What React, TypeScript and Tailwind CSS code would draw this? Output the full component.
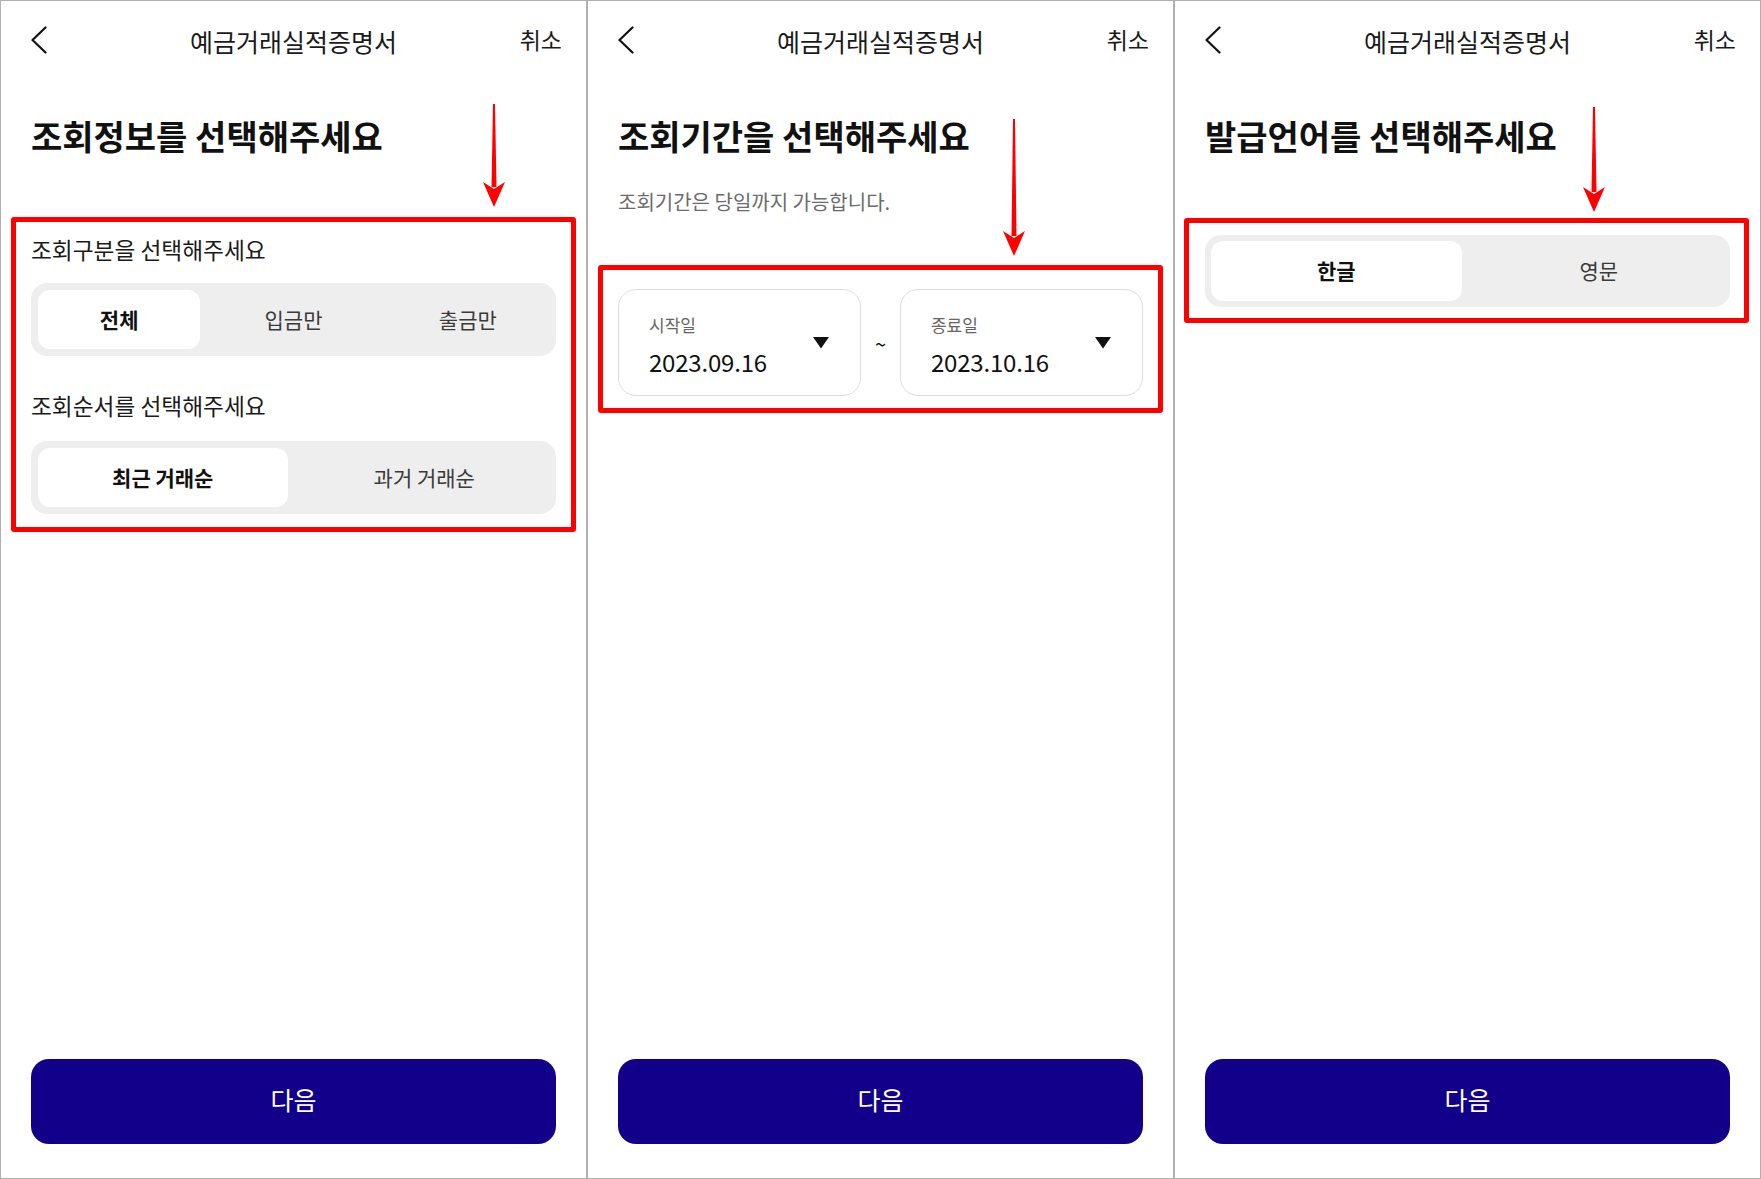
import React from "react";

const Arrow = ({ className, len }: { className: string; len: number }) => (
  <svg className={className} width={24} height={len} viewBox={`0 0 24 ${len}`}>
    <polygon points={`11,0 13,0 14.5,${len - 20} 9.5,${len - 20}`} fill="#ff0000" />
    <polygon points={`1,${len - 25} 12,${len - 18} 23,${len - 25} 12,${len}`} fill="#ff0000" />
  </svg>
);

const Header = () => (
  <div className="grid h-[83px] shrink-0 grid-cols-[1fr_auto_1fr] items-center px-[24px]">
    <div className="mb-[6px] ml-[6px] flex">
      <svg width="16" height="28" viewBox="0 0 16 28">
        <polyline points="14.5,1.5 1.5,14 14.5,26.5" fill="none" stroke="#111" strokeWidth="2.2" strokeLinecap="round" strokeLinejoin="round" />
      </svg>
    </div>
    <div className="mb-[4px] text-[25px] leading-[32px] text-[#1a1a1a]">예금거래실적증명서</div>
    <div className="mb-[7px] text-right text-[23px] leading-[30px] text-[#1a1a1a]">취소</div>
  </div>
);

const Seg = ({ items, selected, tall }: { items: string[]; selected: number; tall?: boolean }) => (
  <div className={tall ? "flex h-[73px] gap-3 rounded-[16px] bg-[#eeeeee] p-[7px]" : "flex h-[72px] gap-3 rounded-[16px] bg-[#eeeeee] p-[6px]"}>
    {items.map((t, i) =>
      i === selected ? (
        <div key={t} className="flex flex-1 items-center justify-center rounded-[12px] bg-white text-[21px] font-bold text-[#111]">
          {t}
        </div>
      ) : (
        <div key={t} className="flex flex-1 items-center justify-center text-[21px] text-[#3a3a3a]">
          {t}
        </div>
      )
    )}
  </div>
);

const Heading = ({ children }: { children: React.ReactNode }) => (
  <h1 className="mb-[2px] mt-[28px] text-[34px] font-bold leading-[48px] text-[#111]">{children}</h1>
);

const NextButton = () => (
  <div className="mx-[30px] mb-[34px] mt-auto flex h-[85px] items-center justify-center rounded-[18px] bg-[#13008a] pb-[4px] text-[25px] text-white">
    다음
  </div>
);

const DateBox = ({ label, value }: { label: string; value: string }) => (
  <div className="flex h-[107px] w-[243px] items-center justify-between rounded-[18px] border border-[#dddddd] pl-[30px] pr-[31px]">
    <div className="flex flex-col pt-[7px]">
      <span className="text-[17px] leading-[22px] text-[#666666]">{label}</span>
      <span className="mt-[10px] text-[24px] leading-[32px] tracking-[-0.2px] text-[#111]">{value}</span>
    </div>
    <svg width="16" height="12" viewBox="0 0 16 12">
      <polygon points="0,0 16,0 8,11.5" fill="#111" />
    </svg>
  </div>
);

export default function App() {
  return (
    <div className="flex h-[1179px] w-[1761px] border border-[#b0b0b0] bg-white font-['Noto_Sans_CJK_KR','Noto_Sans',sans-serif]">
      {/* Panel 1 */}
      <div className="relative flex w-[585px] flex-col">
        <Header />
        <div className="flex flex-col px-[30px]">
          <Heading>조회정보를 선택해주세요</Heading>
          <div className="mt-[71px] text-[22.7px] leading-[33px] text-[#1a1a1a]">조회구분을 선택해주세요</div>
          <div className="mt-[17px]">
            <Seg items={["전체", "입금만", "출금만"]} selected={0} tall />
          </div>
          <div className="mt-[33px] text-[22.7px] leading-[33px] text-[#1a1a1a]">조회순서를 선택해주세요</div>
          <div className="mt-[19px]">
            <Seg items={["최근 거래순", "과거 거래순"]} selected={0} tall />
          </div>
        </div>
        <NextButton />
        <div className="pointer-events-none absolute left-[10px] top-[216px] h-[315px] w-[565px] rounded-[3px] border-[5px] border-[#ff0000]" />
        <Arrow className="pointer-events-none absolute left-[481px] top-[103px]" len={103} />
      </div>
      <div className="w-[2px] shrink-0 bg-[#b0b0b0]" />
      {/* Panel 2 */}
      <div className="relative flex w-[585px] flex-col">
        <Header />
        <div className="flex flex-col px-[30px]">
          <Heading>조회기간을 선택해주세요</Heading>
          <div className="mt-[26px] text-[20px] leading-[27px] text-[#6b6b6b]">조회기간은 당일까지 가능합니다.</div>
          <div className="mt-[74px] flex items-center justify-between">
            <DateBox label="시작일" value="2023.09.16" />
            <span className="mt-[2px] text-[20px] leading-[24px] text-[#111]">~</span>
            <DateBox label="종료일" value="2023.10.16" />
          </div>
        </div>
        <NextButton />
        <div className="pointer-events-none absolute left-[10px] top-[264px] h-[148px] w-[565px] rounded-[3px] border-[5px] border-[#ff0000]" />
        <Arrow className="pointer-events-none absolute left-[414px] top-[118px]" len={137} />
      </div>
      <div className="w-[2px] shrink-0 bg-[#b0b0b0]" />
      {/* Panel 3 */}
      <div className="relative flex flex-1 flex-col">
        <Header />
        <div className="flex flex-col px-[30px]">
          <Heading>발급언어를 선택해주세요</Heading>
          <div className="mt-[73px]">
            <Seg items={["한글", "영문"]} selected={0} />
          </div>
        </div>
        <NextButton />
        <div className="pointer-events-none absolute left-[9px] top-[217px] h-[105px] w-[565px] rounded-[3px] border-[5px] border-[#ff0000]" />
        <Arrow className="pointer-events-none absolute left-[407px] top-[106px]" len={105} />
      </div>
    </div>
  );
}
